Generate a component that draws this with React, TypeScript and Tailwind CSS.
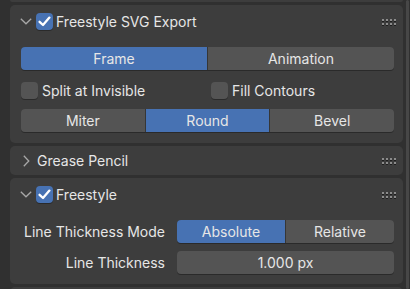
import React from 'react';

const FONT = { fontFamily: 'Inter, "DejaVu Sans", sans-serif' };

function Chevron({ open }: { open: boolean }) {
  return open ? (
    <svg width="12" height="7" viewBox="0 0 12 7" className="shrink-0">
      <path d="M0.8 0.8 L6 5.8 L11.2 0.8" fill="none" stroke="#a8a8a8" strokeWidth="1.3" />
    </svg>
  ) : (
    <svg width="7" height="12" viewBox="0 0 7 12" className="shrink-0">
      <path d="M0.8 0.8 L5.8 6 L0.8 11.2" fill="none" stroke="#a8a8a8" strokeWidth="1.3" />
    </svg>
  );
}

function CheckBox({ checked }: { checked: boolean }) {
  return (
    <div
      className={`w-[17px] h-[17px] rounded-[4px] flex items-center justify-center shrink-0 ${
        checked ? 'bg-[#4772b3]' : 'bg-[#545454]'
      } shadow-[0_1px_0_#2a2a2a]`}
    >
      {checked && (
        <svg width="13" height="11" viewBox="0 0 13 11">
          <path d="M1.6 5.8 L5 9 L11.4 1.6" fill="none" stroke="#ffffff" strokeWidth="2.3" strokeLinecap="round" strokeLinejoin="round" />
        </svg>
      )}
    </div>
  );
}

function DragHandle() {
  return (
    <div className="grid grid-cols-4 gap-x-[2px] gap-y-[2px] shrink-0">
      {Array.from({ length: 8 }).map((_, i) => (
        <div key={i} className="w-[2px] h-[2px] bg-[#8c8c8c] shadow-[0_1px_0_#1e1e1e]" />
      ))}
    </div>
  );
}

function Header({ title, check }: { title: string; check: boolean }) {
  return (
    <div className="flex items-center h-full">
      <div className="w-[26px] pl-[10px] flex items-center">
        <Chevron open />
      </div>
      <div className="mr-[3px]">
        <CheckBox checked={check} />
      </div>
      <span className="text-[14px] text-[#e6e6e6]">{title}</span>
      <div className="ml-auto mr-[7px]">
        <DragHandle />
      </div>
    </div>
  );
}

function Segmented({ items, active }: { items: string[]; active: number }) {
  return (
    <div className="flex h-[23px] rounded-[4px] overflow-hidden shadow-[0_1px_0_#2a2a2a] gap-px bg-[#363636]">
      {items.map((item, i) => (
        <div
          key={item}
          className={`flex-1 flex items-center justify-center text-[14px] text-[#e6e6e6] ${
            i === active ? 'bg-[#4772b3]' : 'bg-[#545454]'
          }`}
        >
          {item}
        </div>
      ))}
    </div>
  );
}

export default function App() {
  return (
    <div className="w-[410px] h-[289px] bg-[#303030] overflow-hidden flex" style={FONT}>
      <div className="w-[393px] ml-[10px] flex flex-col gap-[3px]">
        {/* tail of the panel above */}
        <div className="h-[2px] shrink-0 bg-[#3d3d3d] rounded-b-[4px]" />

        {/* Freestyle SVG Export */}
        <div className="h-[138px] shrink-0 bg-[#3d3d3d] rounded-[5px] flex flex-col">
          <div className="h-[33px]">
            <Header title="Freestyle SVG Export" check />
          </div>
          <div className="pl-[11px] pr-[9px] pt-[9px] flex flex-col">
            <Segmented items={['Frame', 'Animation']} active={0} />
            <div className="mt-[8px] h-[24px] flex items-center">
              <div className="flex-1 flex items-center gap-[4px]">
                <CheckBox checked={false} />
                <span className="text-[14px] text-[#e6e6e6]">Split at Invisible</span>
              </div>
              <div className="flex-1 flex items-center gap-[4px] pl-[7px]">
                <CheckBox checked={false} />
                <span className="text-[14px] text-[#e6e6e6]">Fill Contours</span>
              </div>
            </div>
            <div className="mt-[7px]">
              <Segmented items={['Miter', 'Round', 'Bevel']} active={1} />
            </div>
          </div>
        </div>

        {/* Grease Pencil (collapsed) */}
        <div className="h-[29px] shrink-0 bg-[#3d3d3d] rounded-[5px]">
          <div className="flex items-center h-full">
            <div className="w-[27px] pl-[13px] flex items-center">
              <Chevron open={false} />
            </div>
            <span className="text-[14px] text-[#e6e6e6]">Grease Pencil</span>
            <div className="ml-auto mr-[7px]">
              <DragHandle />
            </div>
          </div>
        </div>

        {/* Freestyle */}
        <div className="h-[106px] shrink-0 bg-[#3d3d3d] rounded-[5px] flex flex-col">
          <div className="h-[33px]">
            <Header title="Freestyle" check />
          </div>
          <div className="pl-[11px] pr-[9px] pt-[9px] flex flex-col">
            <div className="flex items-center">
              <div className="w-[144px] text-right text-[14px] text-[#e6e6e6]">Line Thickness Mode</div>
              <div className="ml-[12px] flex-1">
                <Segmented items={['Absolute', 'Relative']} active={0} />
              </div>
            </div>
            <div className="mt-[8px] flex items-center">
              <div className="w-[144px] text-right text-[14px] text-[#e6e6e6]">Line Thickness</div>
              <div className="ml-[12px] flex-1 h-[23px] rounded-[4px] bg-[#545454] shadow-[0_1px_0_#2a2a2a] flex items-center justify-center text-[14px] text-[#e6e6e6]">
                1.000 px
              </div>
            </div>
          </div>
        </div>

        {/* next panel */}
        <div className="h-[10px] shrink-0 bg-[#3d3d3d] rounded-t-[5px]" />
      </div>
      {/* scrollbar */}
      <div className="ml-[3px] w-[3px] h-full bg-[#474747] rounded-full" />
    </div>
  );
}
